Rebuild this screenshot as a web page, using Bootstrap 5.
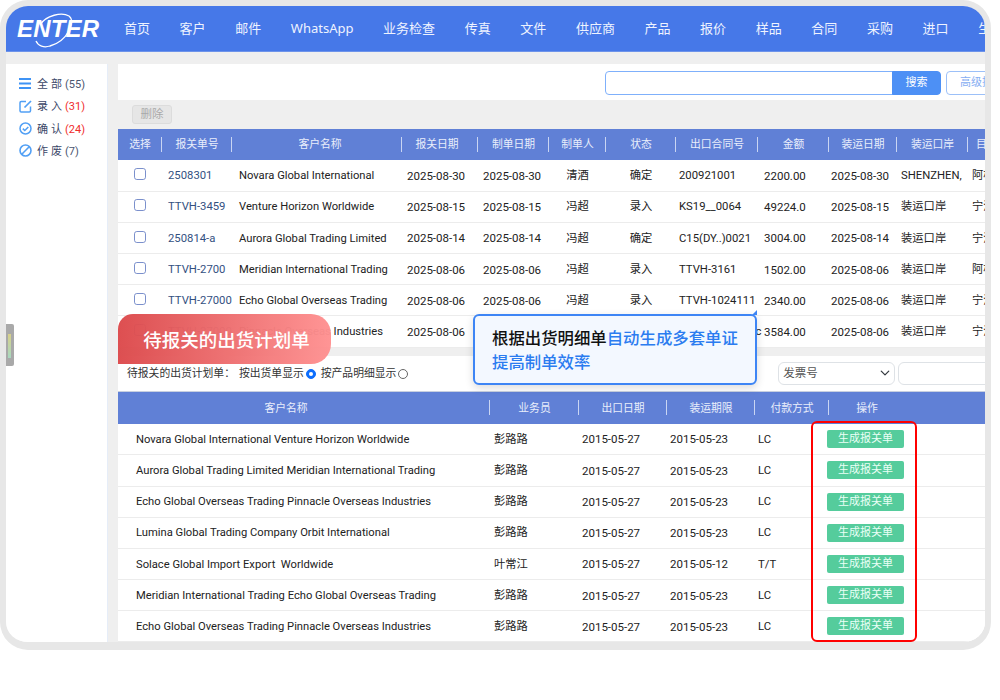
<!doctype html>
<html lang="zh-CN">
<head>
  <meta charset="utf-8">
  <meta name="viewport" content="width=device-width, initial-scale=1">
  <title>报关单</title>
  <link href="https://cdn.jsdelivr.net/npm/bootstrap@5.3.3/dist/css/bootstrap.min.css" rel="stylesheet">
  <style>
    body { background: #fff; font-family: "Roboto", "Noto Sans CJK SC", sans-serif; font-size: 11.3px; color: #222; overflow: hidden; }
    .app-frame { position: relative; width: 991px; height: 650px; background: #efefef; border: 6px solid #e7e7e7; border-bottom-width: 8px; border-radius: 28px; overflow: hidden; }
    .top-nav { height: 46px; padding: 0 0 0 11px; background: #4678e8; border-bottom: 1px solid #6d93ea; flex-wrap: nowrap; justify-content: flex-start; }
    .logo-svg { width: 84px; height: 38px; flex: none; margin-right: 23px; }
    .logo-svg text { font-family: "Liberation Sans", sans-serif; font-weight: 700; font-style: italic; font-size: 24px; fill: #fff; }
    .nav-items { flex-wrap: nowrap; gap: 29.6px; }
    .nav-items a { color: #eef3ff; font-family: "Noto Sans", "Noto Sans CJK SC", sans-serif; font-size: 13px; white-space: nowrap; padding: 0; }
    .page-body { height: 590px; padding-top: 12px; gap: 10px; }
    .side-menu { width: 102px; flex: none; background: #fff; border-right: 1px solid #e6edf8; padding: 10px 0 0 13px; }
    .side-menu .side-row { height: 22.4px; gap: 5px; color: #4a5570; font-size: 11px; }
    .side-menu svg { width: 13px; height: 13px; flex: none; margin-top: -3px; }
    .side-name { letter-spacing: 3px; color: #3b4768; }
    .num-red { color: #f02c2c; }
    .main-area { width: 867px; flex: none; overflow: hidden; }
    .search-bar { height: 36px; background: #fff; padding: 7px 0 0 487px; }
    .search-group { width: 336px; flex: none; flex-wrap: nowrap; height: 24px; }
    .search-group .form-control { height: 24px; min-height: 0; padding: 0 6px; font-size: 11px; border-color: #7fb0fb; border-radius: 4px 0 0 4px; }
    .btn-find { width: 49px; padding: 0; font-size: 11px; background: #4d90f5; border: 1px solid #4d90f5; color: #fff; border-radius: 0 4px 4px 0; }
    .btn-adv { width: 72px; height: 24px; flex: none; margin-left: 5px; padding: 0; font-size: 11px; background: #fff; border: 1px solid #9cc0f8; color: #86aef2; white-space: nowrap; border-radius: 4px; }
    .action-bar { height: 29px; padding: 5px 0 0 14px; }
    .btn.btn-del:disabled { width: 40px; height: 19px; padding: 0; font-size: 11.5px; line-height: 17px; background: #e6e6e6; border: 1px solid #dcdcdc; color: #a9a9a9; border-radius: 3px; opacity: 1; }
    .grid-table { table-layout: fixed; margin: 0; background: #fff; }
    .grid-table th { height: 31px; padding: 2px 0 0; background: #6080d6 linear-gradient(#c9d5f3, #c9d5f3) right center / 1px 15px no-repeat; color: #e9eefb; font-size: 10.8px; font-weight: 400; text-align: center; vertical-align: middle; border: 0; white-space: nowrap; }
    .grid-table td { padding: 2px 0 0; background: #fff; color: #222; vertical-align: middle; white-space: nowrap; border-bottom: 1px solid #ececec; }
    .grid-table td a { color: #33507f; text-decoration: none; }
    .orders { width: 910px; }
    .orders th:nth-child(3) { padding-left: 6px; }
    .orders th:nth-child(4) { padding-right: 6px; }
    .orders td { height: 31.2px; }
    .orders td:nth-child(1), .orders td:nth-child(6), .orders td:nth-child(7) { text-align: center; }
    .orders td:nth-child(2) { padding-left: 6px; }
    .orders td:nth-child(3) { padding-left: 7px; font-size: 11.2px; }
    .orders td:nth-child(4), .orders td:nth-child(5) { padding-left: 5px; font-size: 11.5px; }
    .orders td:nth-child(8) { padding-left: 3px; }
    .orders td:nth-child(9) { padding-left: 6px; font-size: 11.5px; }
    .orders td:nth-child(10) { padding-left: 2px; font-size: 11.5px; }
    .orders td:nth-child(11), .orders td:nth-child(12) { padding-left: 4px; }
    .check-box { width: 12px; height: 12px; margin: 0 0 4px; border-color: #7b90cc; border-radius: 3px; }
    .tool-bar { height: 36px; margin-top: 8px; padding: 2px 0 0 9px; background: #fff; font-size: 10.8px; color: #333; border-bottom: 1px solid #c8d0e0; white-space: nowrap; }
    .tool-bar span { flex: none; }
    .radio-dot { width: 10px; height: 10px; flex: none; margin: 0 5px 0 2px; border-color: #666; }
    .kind-select { width: 117px; height: 23px; flex: none; margin-left: 365px; margin-top: -2px; padding: 0 4px; font-size: 11.5px; color: #555; background-size: 12px 10px; background-position: right 3px center; }
    .kind-input { width: 100px; height: 23px; flex: none; margin-left: 3px; margin-top: -2px; }
    .plans { width: 867px; }
    .plans th { height: 32px; }
    .plans th:nth-child(1) { padding-right: 36px; }
    .plans td { height: 31.2px; }
    .plans th:nth-child(n+6) { background-image: none; }
    .plans td:nth-child(1) { padding-left: 18px; font-size: 11.2px; }
    .plans td:nth-child(2) { padding-left: 4px; }
    .plans td:nth-child(3), .plans td:nth-child(4) { padding-left: 3px; font-size: 11.5px; }
    .plans td:nth-child(5) { padding-left: 3px; }
    .btn-make { display: block; width: 77px; height: 18px; margin: -2px 0 0 -2px; padding: 0; font-size: 11px; line-height: 18px; background: #55cc9c; border: 0; color: #eafff6; border-radius: 2px; }
    .side-handle { position: absolute; left: 0; top: 318px; width: 8px; height: 42px; background: #a9a9a9; border-radius: 0 2px 2px 0; }
    .side-handle::after { content: ""; position: absolute; left: 2px; top: 10px; width: 3px; height: 24px; background: linear-gradient(#d8d08a, #a8d8c0); }
    .plan-tag { position: absolute; left: 112px; top: 308px; width: 213px; height: 50px; padding-left: 4px; background: linear-gradient(90deg, #dc4a4c, #ff9292); color: #fff; font-family: "Noto Sans CJK SC", sans-serif; font-size: 18.5px; font-weight: 500; line-height: 50px; text-align: center; border-radius: 15px 20px 20px 0; opacity: .97; }
    .tip-box { position: absolute; left: 467px; top: 308px; width: 284px; height: 71px; padding: 9px 0 0 17px; background: #f3f8ff; border: 2px solid #3d85f5; border-radius: 6px; box-shadow: 0 3px 8px rgba(0, 0, 0, .14); font-family: "Noto Sans CJK SC", sans-serif; font-size: 16.4px; font-weight: 500; line-height: 24px; color: #111; white-space: nowrap; }
    .tip-box::after { content: ""; position: absolute; right: -2px; top: -6px; border-left: 5px solid transparent; border-bottom: 5px solid #3d85f5; }
    .tip-blue { color: #2b7cf0; }
    .red-outline { position: absolute; left: 805px; top: 415px; width: 106px; height: 221px; border: 2px solid #f00; border-radius: 6px; }
  </style>
</head>
<body>
  <div class="app-frame">
    <nav class="navbar top-nav">
      <svg class="logo-svg" viewBox="0 0 84 38">
        <text x="0" y="27" textLength="82">ENTER</text>
        <path d="M23 15C29 5 45 2 52 6C59 11 51 31 33 36C27 38 21 36 19 31" fill="none" stroke="#fff" stroke-width="1.3"/>
      </svg>
      <div class="nav nav-items">
        <a class="nav-link" href="#">首页</a>
        <a class="nav-link" href="#">客户</a>
        <a class="nav-link" href="#">邮件</a>
        <a class="nav-link" href="#">WhatsApp</a>
        <a class="nav-link" href="#">业务检查</a>
        <a class="nav-link" href="#">传真</a>
        <a class="nav-link" href="#">文件</a>
        <a class="nav-link" href="#">供应商</a>
        <a class="nav-link" href="#">产品</a>
        <a class="nav-link" href="#">报价</a>
        <a class="nav-link" href="#">样品</a>
        <a class="nav-link" href="#">合同</a>
        <a class="nav-link" href="#">采购</a>
        <a class="nav-link" href="#">进口</a>
        <a class="nav-link" href="#">生产</a>
      </div>
    </nav>

    <div class="d-flex page-body">
      <div class="side-menu">
        <div class="d-flex align-items-center side-row">
          <svg viewBox="0 0 13 13" fill="#3f93f5"><rect x="0" y="1" width="12" height="2"/><rect x="0" y="5.5" width="12" height="2"/><rect x="0" y="10" width="12" height="2"/></svg>
          <span><span class="side-name">全部</span>(55)</span>
        </div>
        <div class="d-flex align-items-center side-row">
          <svg viewBox="0 0 13 13" fill="none" stroke="#52a0f5" stroke-width="1.5"><path d="M7 1.5H2.2Q1 1.5 1 2.7V10.8Q1 12 2.2 12H10.3Q11.5 12 11.5 10.8V6.5"/><path d="M5.5 7.5L12 1" stroke-width="1.7"/></svg>
          <span><span class="side-name">录入</span><span class="num-red">(31)</span></span>
        </div>
        <div class="d-flex align-items-center side-row">
          <svg viewBox="0 0 13 13" fill="none" stroke="#52a0f5" stroke-width="1.5"><circle cx="6.5" cy="6.5" r="5.5"/><path d="M3.8 6.6L5.8 8.5L9.3 4.9"/></svg>
          <span><span class="side-name">确认</span><span class="num-red">(24)</span></span>
        </div>
        <div class="d-flex align-items-center side-row">
          <svg viewBox="0 0 13 13" fill="none" stroke="#52a0f5" stroke-width="1.6"><circle cx="6.5" cy="6.5" r="5.5"/><path d="M2.8 10.2L10.2 2.8"/></svg>
          <span><span class="side-name">作废</span>(7)</span>
        </div>
      </div>

      <div class="main-area">
        <div class="d-flex search-bar">
          <div class="input-group search-group">
            <input type="text" class="form-control">
            <button type="button" class="btn btn-find">搜索</button>
          </div>
          <button type="button" class="btn btn-adv">高级搜索</button>
        </div>
        <div class="action-bar">
          <button type="button" class="btn btn-del" disabled>删除</button>
        </div>

        <table class="table grid-table orders">
          <colgroup>
            <col style="width:44px"><col style="width:70px"><col style="width:170px"><col style="width:76px"><col style="width:71px"><col style="width:57px"><col style="width:70px"><col style="width:82px"><col style="width:71px"><col style="width:68px"><col style="width:71px"><col style="width:110px">
          </colgroup>
          <thead>
            <tr><th>选择</th><th>报关单号</th><th>客户名称</th><th>报关日期</th><th>制单日期</th><th>制单人</th><th>状态</th><th>出口合同号</th><th>金额</th><th>装运日期</th><th>装运口岸</th><th class="text-start ps-2">目的港</th></tr>
          </thead>
          <tbody>
            <tr><td><input class="form-check-input check-box" type="checkbox"></td><td><a href="#">2508301</a></td><td>Novara Global International</td><td>2025-08-30</td><td>2025-08-30</td><td>清酒</td><td>确定</td><td>200921001</td><td>2200.00</td><td>2025-08-30</td><td>SHENZHEN,</td><td>阿根廷</td></tr>
            <tr><td><input class="form-check-input check-box" type="checkbox"></td><td><a href="#">TTVH-3459</a></td><td>Venture Horizon Worldwide</td><td>2025-08-15</td><td>2025-08-15</td><td>冯超</td><td>录入</td><td>KS19__0064</td><td>49224.0</td><td>2025-08-15</td><td>装运口岸</td><td>宁波</td></tr>
            <tr><td><input class="form-check-input check-box" type="checkbox"></td><td><a href="#">250814-a</a></td><td>Aurora Global Trading Limited</td><td>2025-08-14</td><td>2025-08-14</td><td>冯超</td><td>确定</td><td>C15(DY..)0021</td><td>3004.00</td><td>2025-08-14</td><td>装运口岸</td><td>宁波</td></tr>
            <tr><td><input class="form-check-input check-box" type="checkbox"></td><td><a href="#">TTVH-2700</a></td><td>Meridian International Trading</td><td>2025-08-06</td><td>2025-08-06</td><td>冯超</td><td>录入</td><td>TTVH-3161</td><td>1502.00</td><td>2025-08-06</td><td>装运口岸</td><td>阿根廷</td></tr>
            <tr><td><input class="form-check-input check-box" type="checkbox"></td><td><a href="#">TTVH-27000</a></td><td>Echo Global Overseas Trading</td><td>2025-08-06</td><td>2025-08-06</td><td>冯超</td><td>录入</td><td>TTVH-1024111</td><td>2340.00</td><td>2025-08-06</td><td>装运口岸</td><td>宁波</td></tr>
            <tr><td><input class="form-check-input check-box" type="checkbox"></td><td><a href="#">TTVH-27000</a></td><td>Pinnacle Overseas Industries</td><td>2025-08-06</td><td>2025-08-06</td><td>冯超</td><td>录入</td><td>TTVH-1024111c</td><td>3584.00</td><td>2025-08-06</td><td>装运口岸</td><td>宁波</td></tr>
          </tbody>
        </table>

        <div class="d-flex align-items-center tool-bar">
          <span class="me-1">待报关的出货计划单：</span>
          <span>按出货单显示</span>
          <input class="form-check-input radio-dot" type="radio" name="showBy" checked>
          <span>按产品明细显示</span>
          <input class="form-check-input radio-dot" type="radio" name="showBy">
          <select class="form-select kind-select"><option>发票号</option></select>
          <input type="text" class="form-control kind-input">
        </div>

        <table class="table grid-table plans">
          <colgroup>
            <col style="width:372px"><col style="width:89px"><col style="width:88px"><col style="width:88px"><col style="width:74px"><col style="width:76px"><col>
          </colgroup>
          <thead>
            <tr><th>客户名称</th><th>业务员</th><th>出口日期</th><th>装运期限</th><th>付款方式</th><th>操作</th><th></th></tr>
          </thead>
          <tbody>
            <tr><td>Novara Global International Venture Horizon Worldwide</td><td>彭路路</td><td>2015-05-27</td><td>2015-05-23</td><td>LC</td><td><button type="button" class="btn btn-make">生成报关单</button></td><td></td></tr>
            <tr><td>Aurora Global Trading Limited Meridian International Trading</td><td>彭路路</td><td>2015-05-27</td><td>2015-05-23</td><td>LC</td><td><button type="button" class="btn btn-make">生成报关单</button></td><td></td></tr>
            <tr><td>Echo Global Overseas Trading Pinnacle Overseas Industries</td><td>彭路路</td><td>2015-05-27</td><td>2015-05-23</td><td>LC</td><td><button type="button" class="btn btn-make">生成报关单</button></td><td></td></tr>
            <tr><td>Lumina Global Trading Company Orbit International</td><td>彭路路</td><td>2015-05-27</td><td>2015-05-23</td><td>LC</td><td><button type="button" class="btn btn-make">生成报关单</button></td><td></td></tr>
            <tr><td>Solace Global Import Export&nbsp; Worldwide</td><td>叶常江</td><td>2015-05-27</td><td>2015-05-12</td><td>T/T</td><td><button type="button" class="btn btn-make">生成报关单</button></td><td></td></tr>
            <tr><td>Meridian International Trading Echo Global Overseas Trading</td><td>彭路路</td><td>2015-05-27</td><td>2015-05-23</td><td>LC</td><td><button type="button" class="btn btn-make">生成报关单</button></td><td></td></tr>
            <tr><td>Echo Global Overseas Trading Pinnacle Overseas Industries</td><td>彭路路</td><td>2015-05-27</td><td>2015-05-23</td><td>LC</td><td><button type="button" class="btn btn-make">生成报关单</button></td><td></td></tr>
          </tbody>
        </table>
      </div>
    </div>

    <div class="side-handle"></div>
    <div class="plan-tag">待报关的出货计划单</div>
    <div class="tip-box">根据出货明细单<span class="tip-blue">自动生成多套单证</span><br><span class="tip-blue">提高制单效率</span></div>
    <div class="red-outline"></div>
  </div>
  <script src="https://cdn.jsdelivr.net/npm/bootstrap@5.3.3/dist/js/bootstrap.bundle.min.js"></script>
</body>
</html>
